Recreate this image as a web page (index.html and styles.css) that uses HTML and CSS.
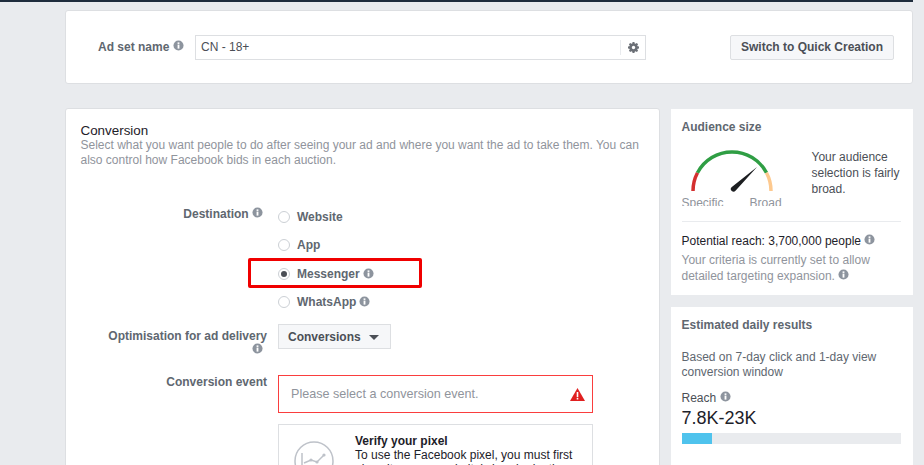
FILE: index.html
```html
<!DOCTYPE html>
<html lang="en">

<head>
  <meta charset="UTF-8">
  <title>Ad set</title>
  <link rel="stylesheet" href="styles.css">
</head>

<body>
  <svg class="defs" width="0" height="0">
    <symbol id="info" viewBox="0 0 12 12">
      <circle cx="6" cy="6" r="5.5" fill="currentColor"></circle>
      <rect x="5" y="5" width="2" height="4.4" fill="#fff"></rect>
      <rect x="5" y="2.6" width="2" height="1.7" fill="#fff"></rect>
    </symbol>
  </svg>

  <div class="page">
    <div class="topbar"></div>

    <div class="card name-card">
      <div class="name-label">Ad set name <svg class="info"><use href="#info"></use></svg></div>
      <div class="name-input">
        <span class="name-value">CN - 18+</span>
        <span class="gear-wrap">
          <svg class="gear" viewBox="0 0 12 12">
            <path fill="#6b6f76" d="M5 .5h2l.3 1.500 1 .4L9.600 1.500 11 2.900l-.9 1.300.4 1L12 5.500v2l-1.500.3-.4 1 .9 1.300L9.600 11.500l-1.300-.9-1 .4L7 12.500H5l-.3-1.500-1-.4-1.300.9L1 10.100l.9-1.300-.4-1L0 7.500v-2l1.500-.3.4-1L1 2.900 2.400 1.500l1.300.9 1-.4z" transform="translate(0 -.5)"></path>
            <circle cx="6" cy="6" r="1.800" fill="#fff"></circle>
          </svg>
        </span>
      </div>
      <button class="quick-btn">Switch to Quick Creation</button>
    </div>

    <div class="columns">
      <div class="card main-card">
        <h2 class="section-title">Conversion</h2>
        <p class="section-desc">Select what you want people to do after seeing your ad and where you want the ad to take them. You can also control how Facebook bids in each auction.</p>

        <div class="form-row">
          <div class="form-label nudge">Destination <svg class="info"><use href="#info"></use></svg></div>
          <div class="radios">
            <div class="radio-row"><span class="radio"></span>Website</div>
            <div class="radio-row"><span class="radio"></span>App</div>
            <div class="radio-row">
              <span class="radio checked"></span>Messenger <svg class="info"><use href="#info"></use></svg>
              <div class="highlight"></div>
            </div>
            <div class="radio-row"><span class="radio"></span>WhatsApp <svg class="info"><use href="#info"></use></svg></div>
          </div>
        </div>

        <div class="form-row delivery-row">
          <div class="form-label nudge">Optimisation for ad delivery <svg class="info"><use href="#info"></use></svg></div>
          <button class="select-btn">Conversions <span class="caret"></span></button>
        </div>

        <div class="form-row event-row">
          <div class="form-label">Conversion event</div>
          <div class="event-col">
            <div class="event-input">
              <span>Please select a conversion event.</span>
              <svg class="warn" viewBox="0 0 15 13">
                <path fill="#e02020" d="M7.500 0 15 13H0z"></path>
                <rect x="6.700" y="4" width="1.600" height="5" fill="#fff"></rect>
                <rect x="6.700" y="9.800" width="1.600" height="1.700" fill="#fff"></rect>
              </svg>
            </div>
            <div class="pixel-box">
              <svg class="pixel-icon" viewBox="0 0 40 40">
                <circle cx="20" cy="20" r="19" fill="none" stroke="#bec2c9" stroke-width="1.500"></circle>
                <path fill="none" stroke="#bec2c9" stroke-width="1.500" d="M8 12v18h24"></path>
                <path fill="none" stroke="#bec2c9" stroke-width="1.500" d="M10 22l7-3 6 2 7-7"></path>
                <circle cx="17" cy="19" r="1.600" fill="#bec2c9"></circle>
                <circle cx="23" cy="21" r="1.600" fill="#bec2c9"></circle>
                <circle cx="30" cy="14" r="1.600" fill="#bec2c9"></circle>
              </svg>
              <div class="pixel-text">
                <div class="pixel-title">Verify your pixel</div>
                <div>To use the Facebook pixel, you must first place it on your website's header by the code</div>
              </div>
            </div>
          </div>
        </div>
      </div>

      <div class="side">
        <div class="card side-card audience-card">
          <h3 class="side-title">Audience size</h3>
          <div class="gauge-row">
            <div class="gauge">
              <svg class="gauge-svg" viewBox="0 0 84 42">
                <path fill="none" stroke="#d42f2f" stroke-width="3.500" d="M3 41A39 39 0 0 1 7.500 22.800"></path>
                <path fill="none" stroke="#2f9e44" stroke-width="3.500" d="M7.500 22.800A39 39 0 0 1 76.500 22.800"></path>
                <path fill="none" stroke="#fdc98f" stroke-width="3.500" d="M76.500 22.800A39 39 0 0 1 81 41"></path>
                <path fill="#1c1e21" d="M67 17 45.500 40.800a2.600 2.600 0 0 1-4-3.500z"></path>
              </svg>
              <div class="gauge-labels"><span>Specific</span><span>Broad</span></div>
            </div>
            <div class="gauge-text">Your audience selection is fairly broad.</div>
          </div>
          <div class="divider"></div>
          <div class="reach-line">Potential reach: 3,700,000 people <svg class="info"><use href="#info"></use></svg></div>
          <div class="muted-line">Your criteria is currently set to allow detailed targeting expansion. <svg class="info"><use href="#info"></use></svg></div>
        </div>

        <div class="card side-card results-card">
          <h3 class="side-title">Estimated daily results</h3>
          <div class="results-desc">Based on 7-day click and 1-day view conversion window</div>
          <div class="reach-label">Reach <svg class="info"><use href="#info"></use></svg></div>
          <div class="reach-num">7.8K-23K</div>
          <div class="bar"><div class="bar-fill" style="width: 13.7%"></div></div>
        </div>
      </div>
    </div>
  </div>
</body>

</html>
```

FILE: styles.css
```css
* {
  margin: 0;
  padding: 0;
  box-sizing: border-box;
}

html,
body {
  height: 100%;
  overflow: hidden;
}

body {
  background: #e9ebee;
  font-family: "Liberation Sans", Arial, sans-serif;
  font-size: 12px;
  color: #1d2129;
}

.defs {
  position: absolute;
}

.topbar {
  height: 2px;
  margin-bottom: 8px;
  background: #1f2d3d;
}

.page {
  padding-right: 11px;
}

.card {
  background: #fff;
  border: 1px solid #dddfe2;
  border-radius: 3px;
}

.info {
  width: 11px;
  height: 11px;
  margin-right: 4px;
  color: #8d949e;
  vertical-align: 0;
}

/* name card */
.name-card {
  display: flex;
  align-items: center;
  height: 74px;
  margin-left: 65px;
  padding: 0 18px 0 32px;
}

.name-label {
  width: 97px;
  font-weight: bold;
  color: #606770;
  white-space: nowrap;
}

.name-input {
  display: flex;
  align-items: center;
  width: 451px;
  height: 25px;
  border: 1px solid #dddfe2;
  color: #4b4f56;
  padding-left: 5px;
}

.name-value {
  flex: 1;
}

.gear-wrap {
  display: flex;
  align-items: center;
  justify-content: center;
  width: 25px;
  height: 15px;
  border-left: 1px solid #e9ebee;
}

.gear {
  width: 11px;
  height: 11px;
}

.quick-btn {
  margin-left: auto;
  width: 164px;
  height: 25px;
  background: #f6f7f9;
  border: 1px solid #dddfe2;
  border-radius: 2px;
  font-family: inherit;
  font-size: 12px;
  font-weight: bold;
  color: #4b4f56;
}

.columns {
  display: flex;
  align-items: flex-start;
  gap: 11px;
  margin-top: 24px;
  margin-left: 65px;
}

/* main column */
.main-card {
  flex: none;
  width: 595px;
  height: 400px;
  padding: 14px 14px 0 14.500px;
}

.section-title {
  font-size: 13.400px;
  font-weight: normal;
  line-height: 15px;
  color: #1d2129;
}

.section-desc {
  margin-bottom: 35px;
  line-height: 14.500px;
  color: #90949c;
}

.form-row {
  display: flex;
}

.form-label {
  flex: none;
  width: 197.500px;
  padding: 0 11px 0 20px;
  text-align: right;
  font-weight: bold;
  color: #606770;
}

.form-label.nudge {
  padding-top: 5px;
}

.radios {
  padding-top: 0.700px;
}

.radio-row {
  position: relative;
  display: flex;
  align-items: center;
  gap: 3px;
  height: 28.330px;
  font-weight: bold;
  color: #606770;
}

.radio {
  width: 12px;
  height: 12px;
  margin-right: 4px;
  border: 1px solid #ccd0d5;
  border-radius: 50%;
  background: #fff;
}

.radio.checked {
  border: 3px solid #fff;
  outline: 1px solid #ccd0d5;
  outline-offset: -1px;
  background: #4b4f56;
}

.radio-row .info {
  margin-right: 0;
}

.highlight {
  position: absolute;
  left: -30px;
  top: -1px;
  width: 174px;
  height: 30px;
  border: 3px solid #f00000;
  border-radius: 2px;
}

.delivery-row {
  margin-top: 8px;
}

.select-btn {
  width: 113px;
  height: 25px;
  padding-left: 9px;
  text-align: left;
  background: #f6f7f9;
  border: 1px solid #dddfe2;
  font-family: inherit;
  font-size: 12px;
  font-weight: bold;
  color: #4b4f56;
}

.caret {
  display: inline-block;
  margin-left: 5px;
  border-left: 5.500px solid transparent;
  border-right: 5.500px solid transparent;
  border-top: 5.500px solid #4b4f56;
  vertical-align: 1px;
}

.event-row {
  margin-top: 18px;
}

.event-col {
  width: 315px;
}

.event-input {
  display: flex;
  align-items: center;
  justify-content: space-between;
  height: 38px;
  padding: 0 7px 0 12px;
  border: 1px solid #fa3e3e;
  font-size: 12.600px;
  color: #90949c;
}

.warn {
  width: 15px;
  height: 13px;
}

.pixel-box {
  display: flex;
  gap: 21px;
  margin-top: 11px;
  padding: 9px 12px 0 15px;
  border: 1px solid #dddfe2;
  height: 110px;
  color: #1d2129;
}

.pixel-icon {
  flex: none;
  width: 40px;
  height: 40px;
  margin-top: 7px;
}

.pixel-title {
  font-weight: bold;
}

/* side column */
.side {
  display: flex;
  flex-direction: column;
  gap: 12px;
  flex: none;
  width: 242px;
  margin-top: 1px;
}

.side-card {
  border: 0;
  border-radius: 0;
  padding: 11px 12px 0 10.500px;
}

.audience-card {
  height: 186px;
}

.results-card {
  height: 200px;
}

.side-title {
  font-size: 12px;
  font-weight: bold;
  line-height: 15px;
  color: #606770;
}

.gauge-row {
  display: flex;
  margin-top: 15px;
}

.gauge {
  flex: none;
  width: 130px;
}

.gauge-svg {
  display: block;
  width: 84px;
  height: 42px;
  margin-left: 8px;
}

.gauge-labels {
  display: flex;
  gap: 26px;
  height: 10px;
  margin-top: 4px;
  overflow: hidden;
  line-height: 14px;
  color: #90949c;
}

.gauge-text {
  margin-top: -1px;
  line-height: 16px;
  color: #4b4f56;
}

.divider {
  margin: 15px 0 11px;
  border-top: 1px solid #e9ebee;
}

.reach-line {
  line-height: 16px;
  color: #1d2129;
}

.muted-line {
  margin-top: 3px;
  line-height: 16px;
  color: #90949c;
}

.results-desc {
  margin-top: 17px;
  line-height: 15px;
  color: #606770;
}

.reach-label {
  margin-top: 11px;
  line-height: 15px;
  color: #4b4f56;
}

.reach-num {
  font-size: 18px;
  line-height: 24px;
  color: #1d2129;
}

.bar {
  height: 11px;
  margin-top: 3px;
  background: #e9ebee;
}

.bar-fill {
  height: 100%;
  background: #4fc3ed;
}
```
